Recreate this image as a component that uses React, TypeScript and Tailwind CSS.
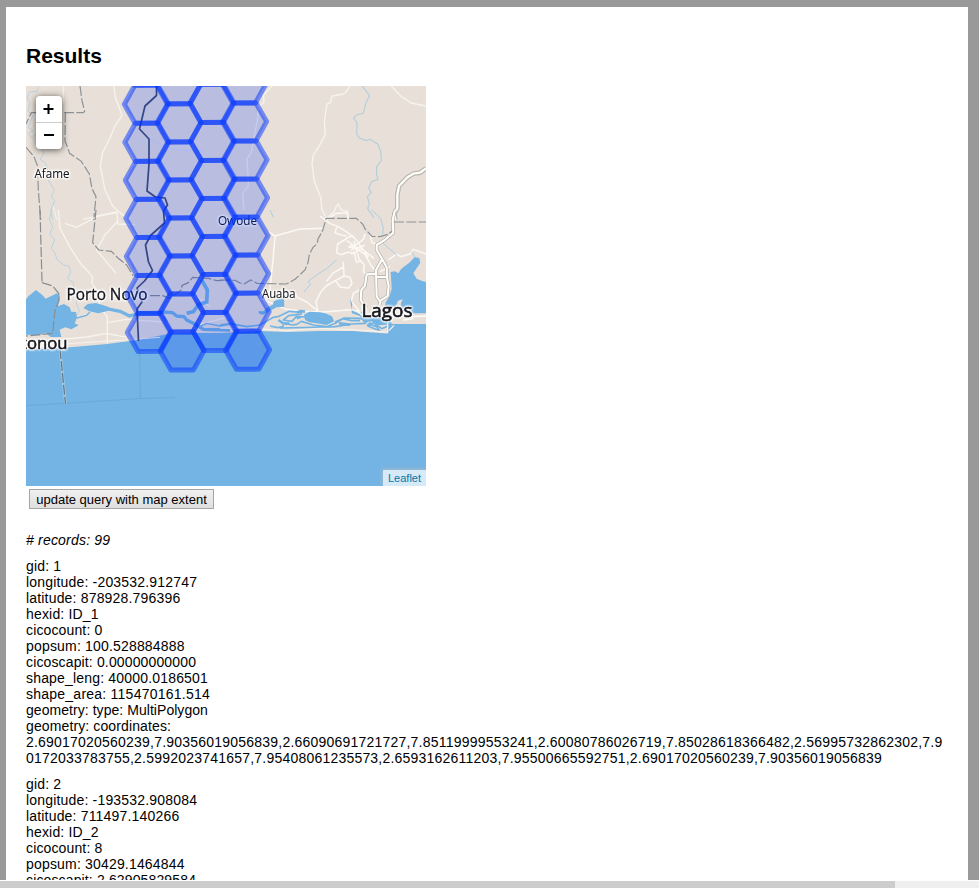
const COLUMNS = [
  { x: 145.8, y: 66.2, count: 8 },
  { x: 178.6, y: 84.8, count: 8 },
  { x: 211.5, y: 65.3, count: 8 },
  { x: 244.1, y: 84, count: 8 },
];

function hexPoints(cx: number, cy: number) {
  return [
    [-22, 0], [-11.4, -19], [11.2, -19.2], [22, -0.4], [11.4, 18.9], [-11.2, 19.1],
  ].map(([dx, dy]) => `${(cx + dx).toFixed(1)},${(cy + dy).toFixed(1)}`).join(" ");
}

function Hexagons() {
  return (
    <g fill="#0033ff" fillOpacity="0.2" stroke="#0033ff" strokeOpacity="0.5" strokeWidth="5" strokeLinejoin="round">
      {COLUMNS.flatMap((c, i) =>
        Array.from({ length: c.count }, (_, r) => (
          <polygon key={`${i}-${r}`} points={hexPoints(c.x + r * 0.5, c.y + r * 38.03)} />
        )),
      )}
    </g>
  );
}

function Label({ x, y, size, width, bold = 0.1, children }: { x: number; y: number; size: number; width: number; bold?: number; children: string }) {
  return (
    <text x={x} y={y} fontSize={size} textLength={width} lengthAdjust="spacingAndGlyphs" fill="#15151c" stroke="#15151c" strokeWidth={bold} className="font-['Open_Sans','Noto_Sans',sans-serif] [filter:drop-shadow(0_0_1px_#fff)_drop-shadow(0_0_1px_#fff)_drop-shadow(0_0_0.7px_#fff)]">
      {children}
    </text>
  );
}

function MapView() {
  return (
    <div className="relative h-[400px] w-[400px] overflow-hidden bg-[#e8e0d8]">
      <svg viewBox="26 86 400 400" className="block h-[400px] w-[400px]" fill="none">
        <rect x="26" y="86" width="400" height="400" fill="#e8e0d8" />
        <path d="M26 349.5L50 348.5L73 347L107 344L138 340L168 334L197 333L220 333L260 331L287 332L320 331L353 331L387 333.5L388 324H426V486H26Z" fill="#73b4e4" />

        {/* north-west quadrant */}
        <g transform="translate(20 80) scale(.33333)">
          <g stroke="#f7f3ed" strokeWidth="4">
            <path d="M282 18L285 48L306 106L285 138L268 178L247 220L241 258L255 330L278 378L300 398L330 420M292 395L250 404L190 418" />
            <path d="M130 18V68L112 95M100 380L110 420" strokeWidth="3" />
            <path d="M390 176L440 202L490 210L550 214M480 180L500 216" stroke="#d5dcf4" strokeWidth="3" />
          </g>
          <path d="M56 20L50 34L28 36L22 54L30 68L24 92L38 108L25 142L39 153L25 160L37 176L48 160M58 195L72 220L60 238L76 248L84 272L98 282L86 302L103 330L94 350L104 362L92 392L98 420" stroke="#b8d2df" strokeWidth="3" />
          <g stroke="#8c9296" strokeWidth="3.6" strokeDasharray="30 7">
            <path d="M180 18L186 62L194 94L190 98L34 98L18 132M136 98L135 182L149 220L184 244L208 282L216 326L228 350L221 420M18 202L42 230L52 256L55 330L62 420" />
          </g>
        </g>

        {/* south-west quadrant */}
        <g transform="translate(20 210) scale(.33333)">
          <g stroke="#f7f3ed" strokeWidth="4">
            <path d="M115 0L120 54L150 112L185 165L205 185L218 202L216 220L237 250M135 40L170 52L230 20L292 8M292 35L255 75L230 120L288 190M292 42L346 44M290 5L294 40M238 250V290L262 320V400M18 398L200 381L260 370L320 382M262 338L318 328L430 336M440 260L510 244L570 290M530 345L630 320" />
            <path d="M20 412L160 400L325 389L420 382" strokeWidth="3" />
          </g>
          <path d="M96 0L88 28L98 49L90 72L104 90L94 116L106 130L110 147L130 165L148 168L152 188L142 206L160 218L162 237L176 254L168 278L178 302L168 320" stroke="#b8d2df" strokeWidth="3" />
          <path d="M18 268L26 258L48 240L66 254L77 266L100 255L110 250L120 258L114 288L132 282L149 292L154 305L168 306L171 323L164 340L176 346L154 358L136 352L119 359L124 381L92 381L76 368L58 376L18 374Z" fill="#73b4e4" />
          <path d="M190 294L203 282L228 279L250 286L264 290L275 300L235 310L208 304Z" fill="#73b4e4" />
          <path d="M260 296L300 304L329 318L365 308L410 310L428 306L458 308L470 318L492 320L500 330L530 345L550 358L630 360" stroke="#73b4e4" strokeWidth="10" strokeLinejoin="round" />
          <path d="M544 208L562 240L560 276L536 284L520 305L500 310" stroke="#73b4e4" strokeWidth="11" />
          <path d="M170 324L200 316L210 306M430 318L442 335M530 354L560 340L600 348L630 343" stroke="#73b4e4" strokeWidth="4" />
          <g stroke="#878d92" strokeWidth="3.6" strokeDasharray="30 7">
            <path d="M60 0L66 215M228 0L218 98L236 120L274 124L295 145L320 165L340 198M66 218L98 228L116 250L117 272L105 300L98 370L18 378M390 257L428 257L450 265L484 240L486 226L505 218L518 202L566 205L590 212L630 210" />
          </g>
        </g>

        {/* north-east quadrant */}
        <g transform="translate(220 80) scale(.33333)">
          <g stroke="#f7f3ed" strokeWidth="4">
            <path d="M389 18L380 34L370 42L336 48L331 68L321 72L313 125L316 162L300 194L280 225L276 250L283 304L303 355L305 388L320 415M320 415L342 396L349 378L355 372L363 390L383 394V415M514 18L542 48L574 69L618 78M156 18L130 45L132 66L116 80L112 122L100 182L94 218L81 237L84 284L85 318L68 340L72 390" />
          </g>
          <path d="M426 18L442 38L448 48L438 68L430 100L408 105L401 115L411 128L410 162L418 174L440 182L450 178L473 192L482 214L484 242L470 260V285L474 298L455 305L446 324L454 338L442 350L448 370L443 386L462 414" stroke="#b4ced9" strokeWidth="3.5" />
          <path d="M618 265L600 278L580 281L562 292L537 318L532 345V384L523 402L526 420" stroke="#b9b5af" strokeWidth="14" />
          <path d="M618 265L600 278L580 281L562 292L537 318L532 345V384L523 402L526 420" stroke="#fffefa" strokeWidth="7" />
        </g>

        {/* Lagos quadrant */}
        <g transform="translate(220 210) scale(.33333)">
          <g stroke="#fbf8f3" strokeWidth="4.5" strokeLinejoin="round">
            <path d="M145 65L165 78L159 150L152 216L148 252L134 276M165 78L240 57L310 55M300 18L330 40L355 50L378 64L405 85L430 120L462 145M320 28L350 10L383 8M383 8V28M350 52L345 68L362 75L380 78M400 76L382 84L353 102L350 128L362 134L386 126L404 132L410 158M380 92L404 108L430 88L435 72M384 110L430 119L445 142M392 132L420 118M402 92L418 150M390 105L434 132M393 120L435 106M410 158L421 151L433 166L430 183L438 195M370 155L372 198L346 212L362 232L386 234L396 220L390 202L372 198M346 212L318 228L302 247L288 275L294 306M372 170L338 190L320 214M450 72L456 98L475 105M505 150L530 132L542 140L570 132L580 118L618 132M434 132L452 164L468 188M480 185L510 170M418 240L400 250L394 275L418 303L382 300L310 306L245 304L200 298L120 265M224 250L232 262L260 276L295 304" />
          </g>
          <path d="M252 246L272 222L264 215L294 192L320 176L350 150M150 0L160 22M455 0L482 25L490 55L488 72M485 95L510 118L530 135M585 142L575 125" stroke="#a9cfe1" strokeWidth="3" />
          <path d="M512 186L525 184L535 190L544 176L568 158L584 142L598 144L601 158L588 178L580 190L590 206L604 212L618 216V310L568 310L546 302L542 282L548 268L534 272L528 288L508 298L490 303L498 276L508 260L515 236Z" fill="#73b4e4" />
          <path d="M115 304L130 304L145 290L158 284L162 274L176 267L192 265L193 290L170 292L148 304L130 314L118 312ZM252 314L268 305L300 307L316 310L336 319L342 334L320 345L290 340L268 337L255 330ZM390 265L397 282L394 300L418 312L430 300L438 316L458 323L482 322L512 328L515 343L475 346L454 334L431 338L420 318L396 310Z" fill="#73b4e4" />
          <g stroke="#73b4e4" strokeWidth="5" strokeLinejoin="round">
            <path d="M0 345L30 341L80 350L120 345L160 322L177 319L208 304L244 307L244 312L206 317L190 330L216 334L229 319L255 321M150 348L174 353L188 350L193 338L215 345L230 343L244 334L280 345L320 350L346 340L372 324L418 325L443 330L436 340L397 342L345 350L280 352L180 354M345 336L368 326L395 332L420 332M452 344L470 350L479 362L445 349L460 338L485 356L510 346" />
            <path d="M230 308L242 303L255 305M175 330L190 340M195 342L208 340M230 325L242 320M357 340L390 344M453 338L442 348" strokeWidth="8" />
          </g>
          <path d="M0 354L110 357L200 362L300 355L400 360L500 366M503 338V370M507 362L522 346" stroke="#f5f0e8" strokeWidth="4" />
          <path d="M515 332L560 334L618 328" stroke="#e8e0d8" strokeWidth="14" />
          <g stroke="#aaa7a2" strokeWidth="10" strokeLinejoin="round">
            <path d="M525 0L518 30L520 68L494 90L470 105L470 120L488 150L500 172L501 204L506 227L503 258L481 272M485 150L468 180L470 260L481 276L474 302M470 191L440 193L435 227L424 240L422 270L440 295M470 201L503 201" />
          </g>
          <g stroke="#fffefa" strokeWidth="6.5" strokeLinejoin="round">
            <path d="M525 0L518 30L520 68L494 90L470 105L470 120L488 150L500 172L501 204L506 227L503 258L481 272M485 150L468 180L470 260L481 276L474 302M470 191L440 193L435 227L424 240L422 270L440 295M470 201L503 201" />
            <path d="M535 318L580 320L618 318M550 330L580 326M415 305L431 320" strokeWidth="4" />
          </g>
          <g stroke="#8c9296" strokeWidth="3.6" strokeDasharray="30 7">
            <path d="M0 210L45 211L60 219L72 222L92 210L112 220L200 222L226 207L255 180L264 158L268 134L279 112L292 101L294 87L307 64L319 25L409 25L428 42L436 58L456 79L480 80L503 73L515 64M522 36H618" />
          </g>
        </g>

        {/* offshore boundary lines */}
        <path d="M26 405.5L64 403.5L140 398.5L175 397.5M139.5 352L140.5 398" stroke="#67a9d8" strokeWidth="1" />
        <path d="M60 349L65.5 404" stroke="#a5cce6" strokeWidth="2.5" />
        <path d="M60 349L65.5 404" stroke="#66757f" strokeWidth="1.2" strokeDasharray="10 2" />

        {/* national border */}
        <path d="M156.5 86V95.5L145 106L139.5 129L149 139V164L147 191L155.5 197L165 198L167.5 205L163.5 211L164.5 223L150.5 235.5L145.5 245L148.5 262L152.5 270.5L144.5 281L137 288L142 302L137 309L138.5 341" stroke="#414c65" strokeWidth="1.7" strokeLinejoin="round" />

        <Label x={34.5} y={178} size={12.5} width={35}>Afame</Label>
        <Label x={218} y={225} size={12.5} width={39}>Owode</Label>
        <Label x={262} y={298} size={12.5} width={33.5}>Auaba</Label>
        <Label x={66.5} y={300} size={16.5} width={81} bold={0.35}>Porto Novo</Label>
        <Label x={361.5} y={317} size={19} width={51} bold={0.6}>Lagos</Label>
        <Label x={21} y={348.5} size={16.5} width={46.5} bold={0.5}>tonou</Label>
        <Hexagons />
      </svg>

      <div className="absolute top-2.5 left-2.5 h-[53px] w-[26px] rounded bg-white text-black shadow-[0_1px_7px_rgba(0,0,0,0.65)]">
        <svg viewBox="0 0 26 53" className="h-[53px] w-[26px]" stroke="#000" strokeWidth="2">
          <path d="M7.5 13H17.5M12.5 8V18M8 39H18" />
          <path d="M0 26.5H26" stroke="#ccc" strokeWidth="1" />
        </svg>
      </div>
      <div className="absolute right-0 bottom-0 h-4 w-[43px] bg-white/70 pl-[5px] text-[11px] leading-4 text-[#0078a8] shadow-[0_0_5px_#bbb]">Leaflet</div>
    </div>
  );
}

const RECORD_ONE = [
  "gid: 1",
  "longitude: -203532.912747",
  "latitude: 878928.796396",
  "hexid: ID_1",
  "cicocount: 0",
  "popsum: 100.528884888",
  "cicoscapit: 0.00000000000",
  "shape_leng: 40000.0186501",
  "shape_area: 115470161.514",
  "geometry: type: MultiPolygon",
  "geometry: coordinates:",
  "2.69017020560239,7.90356019056839,2.66090691721727,7.85119999553241,2.60080786026719,7.85028618366482,2.56995732862302,7.9",
  "0172033783755,2.5992023741657,7.95408061235573,2.6593162611203,7.95500665592751,2.69017020560239,7.90356019056839",
];

const RECORD_TWO = [
  "gid: 2",
  "longitude: -193532.908084",
  "latitude: 711497.140266",
  "hexid: ID_2",
  "cicocount: 8",
  "popsum: 30429.1464844",
  "cicoscapit: 2.62905829584",
];

function tracking(line: string) {
  if (line.length > 40) return "tracking-[0.213px]";
  if (line.endsWith("MultiPolygon")) return "tracking-[0.05px]";
  if (line.endsWith("coordinates:")) return "tracking-[0.12px]";
  if (line.startsWith("shape_area")) return "tracking-[0.24px]";
  if (line.startsWith("cico")) return "tracking-[0.14px]";
  return "tracking-[0.18px]";
}

function RecordBlock({ lines }: { lines: string[] }) {
  return (
    <div className="mb-2.5 whitespace-nowrap">
      {lines.map((line) => (
        <div key={line} className={`h-4 ${tracking(line)}`}>{line}</div>
      ))}
    </div>
  );
}

export default function App() {
  return (
    <div className="flex h-[888px] w-[979px] flex-col overflow-hidden bg-white font-['Liberation_Sans',Arial,sans-serif] text-black">
      <div className="h-[880px] overflow-hidden bg-[#999] pt-[7px] pl-1.5">
        <main className="h-[873px] w-[962px] overflow-hidden bg-white px-5 pt-[37px] text-[14px] leading-4">
          <h2 className="mb-[18px] h-6 text-[21px] leading-6 font-bold">Results</h2>
          <MapView />
          <button className="mt-[3px] ml-[3px] block h-5 w-[185px] border border-[#a5a5a5] bg-linear-to-b from-[#f0f0f0] to-[#dfdfdf] pt-px text-[13px] leading-[18px] whitespace-nowrap">update query with map extent</button>
          <p className="mt-[23px] mb-2.5 h-4 tracking-[0.2px] italic">
            # records: 99
          </p>
          <RecordBlock lines={RECORD_ONE} />
          <RecordBlock lines={RECORD_TWO} />
        </main>
      </div>
      <div className="mt-px h-[7px] bg-[#efefef]">
        <div className="h-[7px] w-[895px] bg-[#cdcdcd]" />
      </div>
    </div>
  );
}
